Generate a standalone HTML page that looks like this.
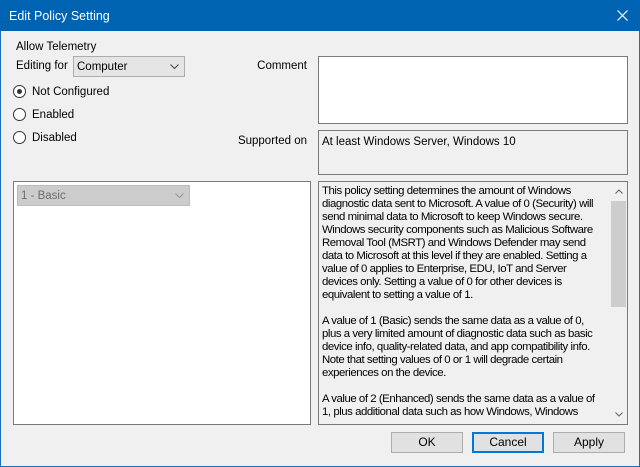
<!DOCTYPE html>
<html><head><style>
*{box-sizing:border-box;margin:0;padding:0}
body{width:640px;height:467px;overflow:hidden;background:#f0f0f0;font-family:"Liberation Sans",sans-serif;font-size:11.5px;color:#000;position:relative}
.win{position:absolute;left:0;top:0;width:640px;height:467px;border:1px solid #1a6fbf;border-top:none}
.title{position:absolute;left:0;top:0;width:640px;height:31px;background:#0063b1;color:#fff;font-size:12.5px;padding:9px 0 0 9px}
.a{position:absolute;white-space:nowrap}
.box{position:absolute;background:#fff;border:1px solid #7a7a7a}
.rad{position:absolute;left:13px;width:13px;height:13px;border:1px solid #333;border-radius:50%;background:#fff}
.btn{position:absolute;top:432px;width:72px;height:21px;background:#e1e1e1;border:1px solid #adadad;text-align:center;line-height:19px;font-size:12px}
</style></head><body>
<div class="win"></div>
<div class="title">Edit Policy Setting</div>
<svg class="a" style="left:617px;top:10px" width="11" height="11"><path d="M0.5 0.5L10.5 10.5M10.5 0.5L0.5 10.5" stroke="#fff" stroke-width="1.2"/></svg>
<div class="a" style="left:16px;top:41px">Allow Telemetry</div>
<div class="a" style="left:16px;top:60px">Editing for</div>
<div class="a" style="left:73px;top:56px;width:112px;height:21px;background:#e5e5e5;border:1px solid #adadad;padding:4px 0 0 3px">Computer
<svg style="position:absolute;right:5px;top:7px" width="9" height="6"><path d="M0.5 0.5L4.5 4.5L8.5 0.5" stroke="#444" fill="none"/></svg></div>
<div class="rad" style="top:85px"><div style="position:absolute;left:3px;top:3px;width:5px;height:5px;border-radius:50%;background:#333"></div></div>
<div class="a" style="left:32px;top:86px">Not Configured</div>
<div class="rad" style="top:108px"></div>
<div class="a" style="left:32px;top:109px">Enabled</div>
<div class="rad" style="top:131px"></div>
<div class="a" style="left:32px;top:132px">Disabled</div>
<div class="a" style="right:333px;top:60px">Comment</div>
<div class="box" style="left:318px;top:56px;width:310px;height:68px"></div>
<div class="a" style="right:333px;top:135px">Supported on</div>
<div class="box" style="left:318px;top:130px;width:310px;height:45px;background:#f0f0f0;padding:5px 3px">At least Windows Server, Windows 10</div>
<div class="box" style="left:13px;top:181px;width:298px;height:244px"></div>
<div class="a" style="left:17px;top:185px;width:173px;height:21px;background:#cccccc;border:1px solid #bcbcbc;color:#6d6d6d;padding:4px 0 0 3px">1 - Basic
<svg style="position:absolute;right:5px;top:7px" width="9" height="6"><path d="M0.5 0.5L4.5 4.5L8.5 0.5" stroke="#999" fill="none"/></svg></div>
<div class="box" style="left:318px;top:181px;width:310px;height:244px;background:#f0f0f0;overflow:hidden">
<div style="position:absolute;left:3px;top:3px;width:292px;line-height:13px;font-size:11.4px;letter-spacing:-0.45px;white-space:nowrap">This policy setting determines the amount of Windows<br>diagnostic data sent to Microsoft. A value of 0 (Security) will<br>send minimal data to Microsoft to keep Windows secure.<br>Windows security components such as Malicious Software<br>Removal Tool (MSRT) and Windows Defender may send<br>data to Microsoft at this level if they are enabled. Setting a<br>value of 0 applies to Enterprise, EDU, IoT and Server<br>devices only. Setting a value of 0 for other devices is<br>equivalent to setting a value of 1.<br><br>A value of 1 (Basic) sends the same data as a value of 0,<br>plus a very limited amount of diagnostic data such as basic<br>device info, quality-related data, and app compatibility info.<br>Note that setting values of 0 or 1 will degrade certain<br>experiences on the device.<br><br>A value of 2 (Enhanced) sends the same data as a value of<br>1, plus additional data such as how Windows, Windows</div>
<div style="position:absolute;left:291px;top:0;width:17px;height:242px;background:#f0f0f0"></div>
<div style="position:absolute;left:292px;top:19px;width:15px;height:106px;background:#cdcdcd"></div>
<svg style="position:absolute;left:296px;top:7px" width="8" height="5"><path d="M0.5 4.5L4 1L7.5 4.5" stroke="#606060" fill="none"/></svg>
<svg style="position:absolute;left:296px;top:230px" width="8" height="5"><path d="M0.5 0.5L4 4L7.5 0.5" stroke="#606060" fill="none"/></svg>
</div>
<div class="btn" style="left:391px">OK</div>
<div class="btn" style="left:472px;border:2px solid #0078d7;line-height:17px">Cancel</div>
<div class="btn" style="left:553px">Apply</div>
</body></html>
